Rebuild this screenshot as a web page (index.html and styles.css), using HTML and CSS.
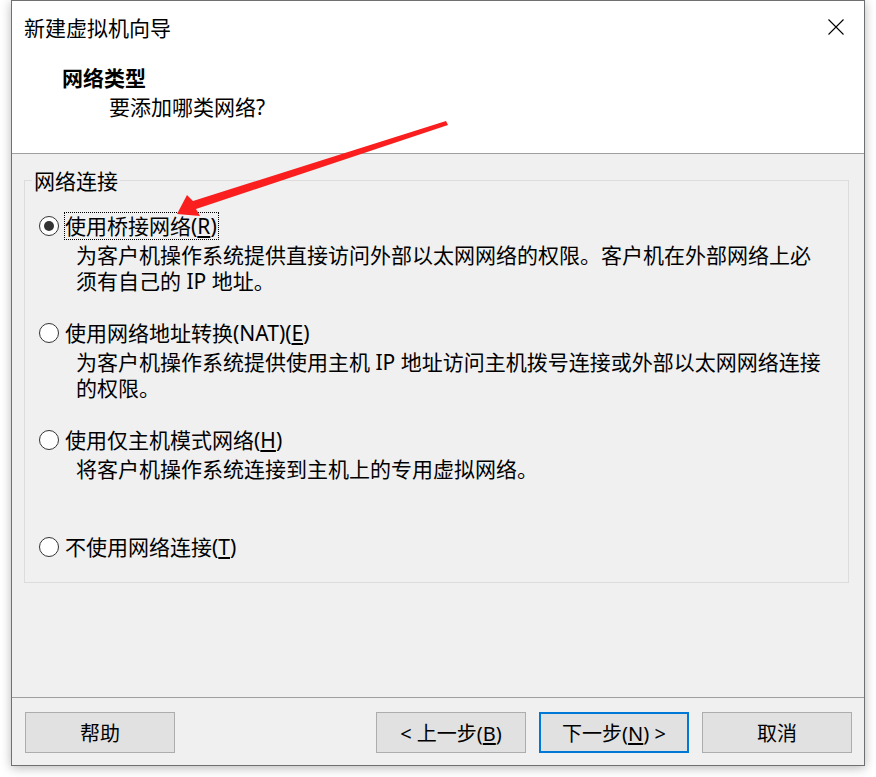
FILE: index.html
```html
<!DOCTYPE html>
<html lang="zh-CN">
<head>
<meta charset="utf-8">
<title>新建虚拟机向导</title>
<link rel="stylesheet" href="styles.css">
</head>
<body>
<div class="window">
  <header class="header">
    <div class="titlebar">
      <span class="title">新建虚拟机向导</span>
      <button class="close" aria-label="关闭">
        <svg width="16" height="16" viewBox="0 0 16 16"><path d="M0.5 0.5 L15.5 15.5 M15.5 0.5 L0.5 15.5" stroke="#000" stroke-width="1.1" fill="none"/></svg>
      </button>
    </div>
    <div class="heading">网络类型</div>
    <div class="subheading">要添加哪类网络?</div>
  </header>

  <main class="content">
    <fieldset class="group">
      <legend class="legend">网络连接</legend>
      <div class="options">
        <div class="option">
          <div class="opt-label"><span class="radio checked"></span><span class="opt-text focused">使用桥接网络(<u>R</u>)</span></div>
          <p class="desc">为客户机操作系统提供直接访问外部以太网网络的权限。客户机在外部网络上必<br>须有自己的 IP 地址。</p>
        </div>
        <div class="option">
          <div class="opt-label"><span class="radio"></span><span class="opt-text">使用网络地址转换(NAT)(<u>E</u>)</span></div>
          <p class="desc">为客户机操作系统提供使用主机 IP 地址访问主机拨号连接或外部以太网网络连接<br>的权限。</p>
        </div>
        <div class="option">
          <div class="opt-label"><span class="radio"></span><span class="opt-text">使用仅主机模式网络(<u>H</u>)</span></div>
          <p class="desc">将客户机操作系统连接到主机上的专用虚拟网络。</p>
        </div>
        <div class="option">
          <div class="opt-label"><span class="radio"></span><span class="opt-text">不使用网络连接(<u>T</u>)</span></div>
        </div>
      </div>
    </fieldset>
  </main>

  <footer class="footer">
    <button class="btn">帮助</button>
    <div class="spacer"></div>
    <button class="btn">&lt; 上一步(<u>B</u>)</button>
    <button class="btn primary">下一步(<u>N</u>) &gt;</button>
    <button class="btn">取消</button>
  </footer>
</div>

<svg class="arrow" width="876" height="777" viewBox="0 0 876 777">
  <polygon points="177,214 187,195 193,201 446,121 448,125 196,209 200,216" fill="#fa1e1e"/>
</svg>
</body>
</html>
```

FILE: styles.css
```css
* { box-sizing: border-box; }

html, body {
  margin: 0;
  padding: 0;
  background: #ffffff;
}

body {
  position: relative;
  width: 876px;
  height: 777px;
  overflow: hidden;
  font-family: "Noto Sans", "Noto Sans CJK SC", sans-serif;
  font-size: 21px;
  color: #000;
}

.window {
  margin-left: 11px;
  width: 854px;
  height: 766px;
  border: 1px solid #707070;
  background: #f0f0f0;
  display: flex;
  flex-direction: column;
  box-shadow: 0 2px 10px rgba(0, 0, 0, 0.28);
}

/* header */
.header {
  height: 153px;
  background: #fff;
  border-bottom: 1px solid #a0a0a0;
  flex: none;
}

.titlebar {
  height: 52px;
  display: flex;
  align-items: center;
  justify-content: space-between;
  padding: 0 20px 0 12px;
}

.title {
  line-height: 52px;
  font-family: "Noto Sans CJK SC", sans-serif;
}

.close {
  width: 16px;
  height: 16px;
  padding: 0;
  border: 0;
  background: none;
  display: block;
}
.close svg { display: block; }

.heading {
  margin-top: 10px;
  padding-left: 50px;
  line-height: 28px;
  font-weight: bold;
  font-family: "Noto Sans CJK SC", sans-serif;
}

.subheading {
  margin-top: 2px;
  padding-left: 97px;
  line-height: 28px;
}

/* content */
.content {
  flex: 1;
  padding: 13px 15px 0 12px;
}

.group {
  margin: 0;
  padding: 19px 0 21px 14px;
  border: 1px solid #dcdcdc;
  min-width: 0;
}

.legend {
  margin-left: -7px;
  padding: 0 2px;
  line-height: 26px;
  font-family: "Noto Sans CJK SC", sans-serif;
}

.options {
  display: grid;
  grid-template-rows: 107px 107px 107px auto;
}

.opt-label {
  display: flex;
  align-items: center;
  height: 28px;
  gap: 5px;
}

.radio {
  width: 20px;
  height: 20px;
  border-radius: 50%;
  border: 1.5px solid #333;
  background: #fff;
  flex: none;
  display: flex;
  align-items: center;
  justify-content: center;
}

.radio.checked::after {
  content: "";
  width: 10px;
  height: 10px;
  border-radius: 50%;
  background: #333;
}

.opt-text {
  border: 1px dotted transparent;
  padding: 0 1px 0 0;
  line-height: 26px;
  white-space: nowrap;
}

.opt-text.focused {
  border-color: #000;
}

.desc {
  margin: 2px 0 0 37px;
  line-height: 26px;
  white-space: nowrap;
}

u {
  text-decoration: underline;
  text-underline-offset: 2px;
}

/* footer */
.footer {
  flex: none;
  height: 68px;
  border-top: 1px solid #a0a0a0;
  padding: 14px 12px 12px 13px;
  display: flex;
  gap: 13px;
}

.spacer { flex: 1; }

.btn {
  width: 150px;
  height: 41px;
  background: #e1e1e1;
  border: 1px solid #adadad;
  font-family: "Noto Sans", "Noto Sans CJK SC", sans-serif;
  font-size: 20px;
  color: #000;
  padding: 0;
}

.btn.primary {
  border: 2px solid #0078d7;
}

.arrow {
  position: absolute;
  left: 0;
  top: 0;
  pointer-events: none;
}
```
